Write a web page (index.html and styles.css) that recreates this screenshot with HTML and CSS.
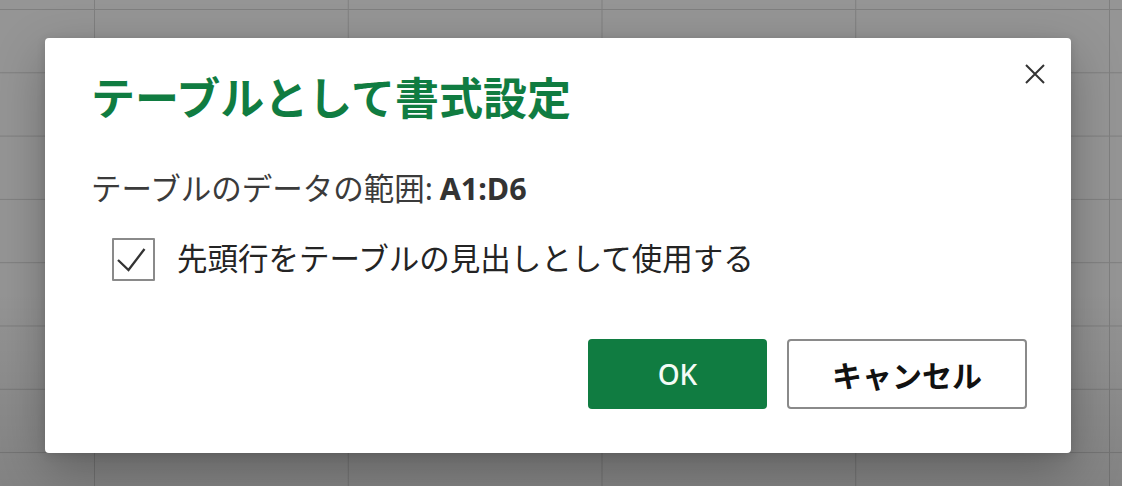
FILE: index.html
```html
<!DOCTYPE html>
<html lang="ja">
<head>
<meta charset="utf-8">
<title>テーブルとして書式設定</title>
<link rel="stylesheet" href="styles.css">
</head>
<body>
<div class="sheet">
  <div class="dialog" role="dialog" aria-labelledby="dlg-title">
    <button class="close" aria-label="閉じる">
      <svg width="20" height="20" viewBox="0 0 20 20" aria-hidden="true">
        <path d="M1 1 L19 19 M19 1 L1 19" stroke="#333" stroke-width="2" fill="none" stroke-linecap="butt"/>
      </svg>
    </button>
    <h1 class="title" id="dlg-title">テーブルとして書式設定</h1>
    <p class="range">テーブルのデータの範囲<span class="latin">:</span> <span class="range-value">A1:D6</span></p>
    <label class="check-row">
      <span class="checkbox">
        <svg width="39" height="39" viewBox="0 0 39 39" aria-hidden="true">
          <path d="M4 20 L14.5 30 L30.5 9" stroke="#333" stroke-width="2.3" fill="none"/>
        </svg>
      </span>
      <span class="check-label">先頭行をテーブルの見出しとして使用する</span>
    </label>
    <div class="actions">
      <button class="btn btn-primary">OK</button>
      <button class="btn btn-secondary">キャンセル</button>
    </div>
  </div>
</div>
</body>
</html>
```

FILE: styles.css
```css
html, body {
  margin: 0;
  padding: 0;
}

body {
  width: 1122px;
  height: 486px;
  overflow: hidden;
  font-family: "Noto Sans CJK JP", "Noto Sans", sans-serif;
  background-color: #959595;
  background-image:
    linear-gradient(to right, #7f7f7f 1px, transparent 1px),
    linear-gradient(to bottom, #7f7f7f 1px, transparent 1px);
  background-size: 253.75px 63.3px, 253.75px 63.3px;
  background-position: 94px 9px, 94px 9px;
}

.sheet {
  height: 486px;
  padding-top: 38px;
  padding-left: 45px;
  box-sizing: border-box;
  background: linear-gradient(to bottom, rgba(0,0,0,0) 0%, rgba(0,0,0,0) 60%, rgba(0,0,0,0.12) 100%);
}

.dialog {
  position: relative;
  width: 1026px;
  box-sizing: border-box;
  background: #fff;
  border-radius: 4px;
  padding: 32px 44px 44px 46px;
  box-shadow: 0 18px 50px rgba(0,0,0,0.28), 0 2px 10px rgba(0,0,0,0.12);
}

.close {
  position: absolute;
  top: 26px;
  right: 26px;
  width: 20px;
  height: 20px;
  padding: 0;
  margin: 0;
  border: 0;
  background: transparent;
  display: block;
}

.close svg {
  display: block;
}

.title {
  margin: 0;
  font-size: 44px;
  line-height: 52px;
  font-weight: 700;
  color: #107c41;
  letter-spacing: 0;
}

.range {
  margin: 45px 0 0 0;
  font-size: 30.5px;
  line-height: 40px;
  color: #3b3b3b;
  font-weight: 400;
}

.latin {
  font-family: "Noto Sans", sans-serif;
  line-height: 1;
}

.range-value {
  font-family: "Noto Sans", sans-serif;
  font-weight: 700;
  color: #333;
  line-height: 1;
}

.check-row {
  display: flex;
  align-items: flex-start;
  margin-top: 31px;
  margin-left: 21px;
  height: 43px;
}

.checkbox {
  width: 43px;
  height: 43px;
  box-sizing: border-box;
  border: 2px solid #8a8a8a;
  border-radius: 1px;
  flex: none;
  display: flex;
}

.checkbox svg {
  display: block;
}

.check-label {
  margin-left: 22px;
  margin-top: -1px;
  font-size: 30.5px;
  line-height: 40px;
  color: #242424;
}

.actions {
  display: flex;
  justify-content: flex-end;
  gap: 20px;
  margin-top: 58px;
}

.btn {
  height: 70px;
  box-sizing: border-box;
  border-radius: 4px;
  margin: 0;
  padding: 0;
  font-family: "Noto Sans CJK JP", "Noto Sans", sans-serif;
  display: flex;
  align-items: center;
  justify-content: center;
}

.btn-primary {
  width: 179px;
  background: #107c41;
  border: 0;
  color: #f4fbf6;
  font-family: "Noto Sans", sans-serif;
  font-weight: 500;
  font-size: 28px;
}

.btn-secondary {
  width: 240px;
  background: #fff;
  border: 2px solid #8a8a8a;
  color: #111;
  font-weight: 700;
  font-size: 30px;
}
```
